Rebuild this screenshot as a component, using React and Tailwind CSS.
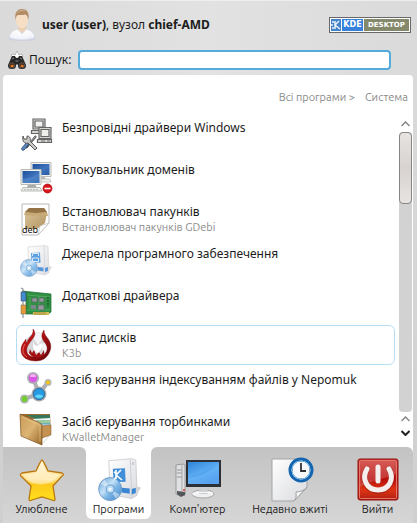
import React from "react";

function Gradients() {
  return (
    <svg className="absolute h-0 w-0" aria-hidden="true">
      <defs>
        <linearGradient id="screen" x1="0" y1="0" x2="1" y2="1">
          <stop offset="0" stopColor="#1d4f9c" /><stop offset="0.55" stopColor="#3f74bd" /><stop offset="1" stopColor="#2a5aa5" />
        </linearGradient>
        <linearGradient id="sky" x1="0" y1="0" x2="0.6" y2="1">
          <stop offset="0" stopColor="#2f84d8" /><stop offset="0.5" stopColor="#58a9f0" /><stop offset="1" stopColor="#3d8eea" />
        </linearGradient>
        <linearGradient id="box" x1="0" y1="0" x2="1" y2="1">
          <stop offset="0" stopColor="#dcc7a0" /><stop offset="1" stopColor="#b3935f" />
        </linearGradient>
        <linearGradient id="paper" x1="0" y1="0" x2="1" y2="1">
          <stop offset="0" stopColor="#ffffff" /><stop offset="1" stopColor="#d9dade" />
        </linearGradient>
        <linearGradient id="star" x1="0" y1="0" x2="0" y2="1">
          <stop offset="0" stopColor="#fff0c4" /><stop offset="0.48" stopColor="#ffe08a" /><stop offset="0.6" stopColor="#fdc91e" /><stop offset="1" stopColor="#ffe11a" />
        </linearGradient>
        <linearGradient id="red" x1="0" y1="0" x2="0" y2="1">
          <stop offset="0" stopColor="#cf3a35" /><stop offset="0.5" stopColor="#b80f0b" /><stop offset="0.75" stopColor="#dd3414" /><stop offset="1" stopColor="#b02010" />
        </linearGradient>
        <linearGradient id="wallet" x1="0" y1="0" x2="1" y2="1">
          <stop offset="0" stopColor="#c99b55" /><stop offset="0.5" stopColor="#dcb474" /><stop offset="1" stopColor="#946325" />
        </linearGradient>
        <linearGradient id="disc" x1="0" y1="0" x2="1" y2="1">
          <stop offset="0" stopColor="#5a97d2" /><stop offset="0.4" stopColor="#c4e2f8" /><stop offset="0.6" stopColor="#79b5e6" /><stop offset="1" stopColor="#4280c4" />
        </linearGradient>
        <radialGradient id="shirt" cx="0.5" cy="0.2" r="0.9">
          <stop offset="0" stopColor="#ffffff" /><stop offset="0.7" stopColor="#f2f3fa" /><stop offset="1" stopColor="#b9bed4" />
        </radialGradient>
        <linearGradient id="flame" x1="0" y1="0" x2="1" y2="1">
          <stop offset="0" stopColor="#d8201c" /><stop offset="0.5" stopColor="#a80f12" /><stop offset="1" stopColor="#5d0508" />
        </linearGradient>
      </defs>
    </svg>
  );
}

function UserIcon() {
  return (
    <svg className="h-8 w-7 shrink-0" viewBox="0 0 28 32" aria-hidden="true">
      <path d="M1 30C1 24 5 21 10 20l4 2 4-2c5 1 9 4 9 10-2 2-24 2-26 0z" fill="url(#shirt)" stroke="#cdd0de" strokeWidth=".6" />
      <path d="M10 18h8v3l-4 4-4-4z" fill="#edcfab" />
      <path d="M11 20l3 5 3-5" fill="none" stroke="#d9dbe8" />
      <ellipse cx="14" cy="10.500" rx="6" ry="9" fill="#f6dfc5" />
      <path d="M7.700 11C6 3 10 0 14 0s8 3 6.300 11C19.500 7 19 6 17 5.500c-3 1-6 0-8 1-.8 1-1 2-1.300 4.500z" fill="#b28c64" />
      <path d="M9 4c2-3 6-3 8-2" stroke="#d3b48d" fill="none" />
    </svg>
  );
}

function BinocularsIcon() {
  return (
    <svg className="h-[18px] w-[18px] shrink-0" viewBox="0 0 18 18" aria-hidden="true">
      <path d="M3 6l1-3 3 1 2-4 2 4 3-1 1 3" fill="#fff" stroke="#aaa" strokeWidth=".8" />
      <path d="M4 5h3l1 2h2l1-2h3l4 9c0 3-1 4-4 4s-4-1-4-4l-1-1-1 1c0 3-1 4-4 4s-4-1-4-4z" fill="#272727" />
      <path d="M4 8l2-1M12 7l2 1M7.500 10h3" stroke="#888" />
      <circle cx="4" cy="14.500" r="2.700" fill="#4b2d1a" stroke="#777" strokeWidth=".5" />
      <circle cx="14" cy="14.500" r="2.700" fill="#4b2d1a" stroke="#777" strokeWidth=".5" />
      <path d="M2.500 15c1-2 2-1 3-1v2H3zm10 0c1-2 2-1 3-1v2h-2.500z" fill="#e07c2a" />
    </svg>
  );
}

function Icon({ children }) {
  return <svg className="mt-[3px] h-8 w-8 shrink-0 overflow-visible" viewBox="0 0 32 32" aria-hidden="true">{children}</svg>;
}

function WirelessIcon() {
  return (
    <Icon>
      <g stroke="#666" strokeWidth="1.200" fill="#d6d6d2">
        <path d="M13 0h12v10H13z" /><path d="M15 2h8v6h-8z" fill="#f3f3f1" /><path d="M11.500 11.500h13v3h-13z" />
        <path d="M19 8.500h12v11H19z" /><path d="M21 10.500h8v7h-8z" fill="#eeeeeb" /><path d="M17.500 20.500h14v3h-14z" />
      </g>
      <path d="M27 22h3M21 22h4" stroke="#777" />
      <path d="M16 17L6 29" stroke="#444" strokeWidth="2" /><path d="M15.500 17.500L8 26" stroke="#ddd" strokeWidth=".7" />
      <path d="M9 25l-5 6c-2 1-3-1-2-2l5-6z" fill="#6188bc" stroke="#294b79" strokeWidth=".9" />
      <path d="M3 17l1 3 3 0 0-3c3 0 4 3 3 5l7 7-2 2-7-7c-4 1-6-2-5-7z" fill="#c8c8c4" stroke="#4b4b4b" strokeWidth=".9" />
    </Icon>
  );
}

function BlockerIcon() {
  return (
    <Icon>
      <path d="M16 16h9l1 3H15z" fill="#bbb" /><path d="M15 18h15l1 3H16z" fill="#eceeeb" stroke="#b3b5b1" strokeWidth=".7" />
      <path d="M11 1.500h20v14H11z" fill="#f2f3f0" stroke="#babdb6" /><path d="M12.500 3h17v11h-17z" fill="url(#screen)" />
      <path d="M8 23h7l2 4H7z" fill="#aaa" />
      <path d="M3 26.500h17l2 3.500H1z" fill="#eceeeb" stroke="#a9aca5" strokeWidth=".8" /><path d="M4 28.500h15" stroke="#bbb" strokeDasharray="2 1" />
      <path d="M1 8.500h20v15H1z" fill="#f2f3f0" stroke="#babdb6" /><path d="M2.500 10h17v12h-17z" fill="url(#screen)" />
      <path d="M3 18c6-1 12-2 16-6v10H3z" fill="#6aa0dc" opacity=".35" />
      <circle cx="27.500" cy="27.500" r="4.500" fill="#d8141c" stroke="#a6080e" strokeWidth=".7" /><path d="M24.500 27.500h6" stroke="#fff" strokeWidth="1.500" />
    </Icon>
  );
}

function DebIcon() {
  return (
    <Icon>
      <path d="M2 1h27v19L18 32H2z" fill="#fff" stroke="#b9b9b9" />
      <path d="M5 9l4-4h15l3 4-2 11-8 6H5z" fill="url(#box)" /><path d="M5 9l4-4h15l3 4-11 2z" fill="#947347" />
      <path d="M5 9l-1 3 11 1 1-3zM27 9l1 4-11 0-1-3z" fill="#c7a877" />
      <text x="2" y="30" fontFamily="Noto Sans, sans-serif" fontSize="9" fill="#111">deb</text>
      <path d="M18 32l2-9 9-3z" fill="#fff" stroke="#bbb" strokeWidth=".7" />
    </Icon>
  );
}

function SoftwareArt() {
  return (
    <>
      <path d="M27 29l5-7-3-1z" fill="#999" opacity=".4" />
      <path d="M8 2l17-1.500 3 1 1 26-4 2.500L9 27z" fill="url(#paper)" stroke="#c6c8ce" strokeWidth=".6" />
      <path d="M24 1l1 28" stroke="#c9ccd4" strokeWidth=".7" />
      <path d="M11 8l9-.5.5 10-9 .5z" fill="#418fd9" /><path d="M17.500 22l6 .5v4l-6-1zM25 23l3-1v4l-3 1z" fill="#3a86d3" />
      <circle cx="9" cy="23" r="8.500" fill="url(#disc)" stroke="#6b9ac8" strokeWidth=".7" />
      <path d="M9 23L2 19a8 8 0 0 1 3-3zM9 23l7 4a8 8 0 0 1-3 3z" fill="#fff" opacity=".45" />
      <circle cx="9" cy="23" r="3" fill="#bcdcf4" stroke="#6196cb" strokeWidth=".7" /><circle cx="9" cy="23" r="1.200" fill="#f7fbff" />
    </>
  );
}

function SourcesIcon() {
  return (
    <Icon>
      <g opacity=".85"><SoftwareArt /><path d="M12.500 11v-2.500h6V11M12.500 13h6v3.500h-6z" fill="none" stroke="#d4e9fb" /></g>
    </Icon>
  );
}

function CardIcon() {
  return (
    <Icon>
      <path d="M2 4l29 3v18l-3 2H6V8z" fill="#2f8f43" stroke="#1d6a2e" strokeWidth=".7" />
      <path d="M7 8l23 2M7 23h23M10 10v12M19 9v15" stroke="#5eb36b" strokeWidth=".7" />
      <path d="M13 25h16v3H13z" fill="#d4bc58" /><path d="M15 25v3m2-3v3m2-3v3m2-3v3m2-3v3m2-3v3" stroke="#75682b" strokeWidth=".5" />
      <path d="M1 1l2 1v29" fill="none" stroke="#8c9198" strokeWidth="1.200" />
      <path d="M1 5h5v9H1z" fill="#438ed0" stroke="#335" strokeWidth=".5" /><path d="M1 18h5v9H1z" fill="#e49a38" stroke="#665" strokeWidth=".5" />
      <path d="M12 11h5v4h-5zm7 0h5v4h-5zm-1 7h6v5h-6z" fill="#959a9f" stroke="#5d6a65" strokeWidth=".8" />
      <path d="M11 18h5v4h-5z" fill="#7b858c" /><path d="M28 10v10" stroke="#173f20" strokeDasharray="2 1" />
    </Icon>
  );
}

function BurnIcon() {
  return (
    <Icon>
      <circle cx="18" cy="16" r="12" fill="#d9d9dc" stroke="#c5c5c9" />
      <path d="M18 16L11 6c4-3 10-3 14 0zM18 16l11-3c1 4 0 8-3 11z" fill="#f4f4f6" />
      <path d="M13 0c4 5 1 8-2 12-3 4-5 7-4 11 1 4 5 5 9 5 6 0 10-3 11-7 1-4-2-7-4-10-2-4-1-7 1-10 0 4 2 6 4 9 3 4 4 9 1 14-2 5-7 8-13 8C7 32 1 28 1 21c0-5 3-8 5-11 0 2 0 3 1 4 1-6 7-7 6-14z" fill="url(#flame)" stroke="#74090c" strokeWidth=".4" />
      <path d="M5 15c-3 5-3 10 2 13" fill="none" stroke="#ef7c70" strokeWidth=".8" />
      <path d="M9 24l1-4 2 4 2-3 2 5 3-3 2 3 3-5 0 5c-4 4-11 4-15-2z" fill="#a31215" />
      <path d="M13 10c0 4 1 6 4 7l5-3-1 6-3 4c-3-1-5-4-5-7z" fill="#fff" />
    </Icon>
  );
}

function NepomukIcon() {
  return (
    <Icon>
      <path d="M13 7l6 16M4 28l15-5 9-12" fill="none" stroke="#aeb0b2" strokeWidth="4" />
      <circle cx="13" cy="7" r="6" fill="#adafb2" /><circle cx="19" cy="23" r="7.500" fill="#a7a9ac" />
      <circle cx="4.500" cy="28" r="4.500" fill="#b3b5b7" /><circle cx="28" cy="11.500" r="3.500" fill="#b3b5b7" />
      <circle cx="13" cy="7" r="4.200" fill="#dc55e6" /><path d="M10 6a3 3 0 0 1 6 0z" fill="#f2b0f5" />
      <circle cx="19" cy="23" r="5.700" fill="#2798e2" stroke="#1b5c91" strokeWidth=".7" /><path d="M15 25c2-2 6-2 8 0-1 3-7 3-8 0z" fill="#5fd4f9" />
      <circle cx="4.500" cy="28" r="2.900" fill="#6fce30" /><circle cx="28" cy="11.500" r="2" fill="#f3c313" />
    </Icon>
  );
}

function WalletIcon() {
  return (
    <Icon>
      <path d="M0 1h30l1 20-8 3z" fill="#9c6b2f" /><path d="M6 2h24v3L21 8z" fill="#347a59" />
      <path d="M12 6l18-1v8H20z" fill="#eef3f6" /><path d="M16 8h14M18 10h12" stroke="#43a348" /><path d="M20 11h10" stroke="#4594d5" />
      <path d="M20 13l11-1v10l-9 3z" fill="#c49151" stroke="#805321" strokeWidth=".5" />
      <path d="M0 1l20 9c2 1 2 2 2 4v18L1 23z" fill="url(#wallet)" stroke="#7b501d" strokeWidth=".7" />
      <path d="M2 4l18 8 0 17" fill="none" stroke="#edcc92" strokeWidth=".6" />
      <path d="M22 31l8-9" stroke="#aaa" opacity=".5" />
    </Icon>
  );
}

function TabIcon({ children }) {
  return <svg className="h-11 w-11 overflow-visible" viewBox="0 0 44 44" aria-hidden="true">{children}</svg>;
}

function StarIcon() {
  return (
    <TabIcon>
      <path d="M22 2c1 0 2 2 6 11l14 2c2 1 2 2 0 3L33 28l2 13c0 2-1 2-3 1l-10-3-10 3c-2 1-3 1-3-1l2-13L1 18c-1-1-1-2 1-3l14-2c4-9 5-11 6-11z" fill="url(#star)" stroke="#b97712" strokeWidth="1.300" />
      <path d="M22 4l5 11 13 2-8 7c-7 3-14 3-20 1L3 17l13-2z" fill="#fff" opacity=".4" />
    </TabIcon>
  );
}

function ProgramsIcon() {
  return (
    <TabIcon>
      <g transform="translate(1 0) scale(1.35)"><SoftwareArt /></g>
      <path d="M19 12v9m5-9l-5 5 6 5m-8-1l2-1m-2-6l2 1" fill="none" stroke="#fff" strokeWidth="1.600" />
      <path d="M36 4v3" stroke="#999" strokeWidth=".8" />
    </TabIcon>
  );
}

function ComputerIcon() {
  return (
    <TabIcon>
      <path d="M0 7l7-1 2 1v30l-5 1-4-2z" fill="#dfe0e2" stroke="#888b90" strokeWidth=".8" /><path d="M6 6v31" stroke="#a6a8ac" />
      <path d="M1 12h5M1 15h5M1 19h5" stroke="#999" /><path d="M1 33l8 1v3l-4 2-4-3z" fill="#55575b" /><circle cx="8" cy="32" r="1" fill="#dc3d2f" />
      <ellipse cx="27" cy="36" rx="11" ry="4" fill="#f0f0f2" stroke="#a5a6aa" /><path d="M24 28h7l1 8h-9z" fill="#ccced2" />
      <path d="M10 2h35v27H10z" fill="#2b3037" /><path d="M12 4h31v22H12z" fill="url(#sky)" />
      <path d="M12 20C22 19 33 15 43 6v20H12z" fill="#87c8ff" opacity=".35" />
      <path d="M16 36c5-2 16-2 21-1" stroke="#fff" fill="none" />
    </TabIcon>
  );
}

function RecentIcon() {
  return (
    <TabIcon>
      <path d="M4 1h35v28L26 43H4z" fill="url(#paper)" stroke="#a3a4a6" /><path d="M26 43c3-3 2-7 2-9 3 0 8-1 11-5z" fill="#fafafa" stroke="#9d9ea1" />
      <circle cx="33" cy="12" r="11" fill="#f7f8fa" stroke="#1265ae" strokeWidth="3" /><circle cx="33" cy="12" r="9" fill="none" stroke="#65aee2" />
      <path d="M33 5v8h5" fill="none" stroke="#303338" strokeWidth="1.800" /><path d="M33 3v1m0 16v1m-9-9h1m16 0h1" stroke="#777" />
    </TabIcon>
  );
}

function PowerIcon() {
  return (
    <TabIcon>
      <rect x="2" y="1" width="40" height="41" rx="2" fill="url(#red)" stroke="#90110c" />
      <rect x="3.500" y="2.500" width="37" height="38" rx="1" fill="none" stroke="#e2756c" />
      <path d="M4 3h36v13C30 20 15 23 4 29z" fill="#fff" opacity=".17" />
      <path d="M11 11c-6 10 0 22 11 22s17-12 11-22" fill="none" stroke="#801510" strokeWidth="6" strokeLinecap="round" opacity=".4" />
      <path d="M11 11c-6 10 0 21 11 21s17-11 11-21M22 9v14" fill="none" stroke="#f4efed" strokeWidth="5" strokeLinecap="round" />
    </TabIcon>
  );
}

const apps = [
  { title: "Безпровідні драйвери Windows", Art: WirelessIcon },
  { title: "Блокувальник доменів", Art: BlockerIcon },
  { title: "Встановлювач пакунків", sub: "Встановлювач пакунків GDebi", Art: DebIcon },
  { title: "Джерела програмного забезпечення", Art: SourcesIcon },
  { title: "Додаткові драйвера", Art: CardIcon },
  { title: "Запис дисків", sub: "K3b", Art: BurnIcon, selected: true },
  { title: "Засіб керування індексуванням файлів у Nepomuk", Art: NepomukIcon },
  { title: "Засіб керування торбинками", sub: "KWalletManager", Art: WalletIcon },
];

const tabs = [
  { label: "Улюблене", Art: StarIcon, style: "rounded-tr-md pr-[6px] bg-linear-to-b from-[#c3c3c3] to-[#d6d6d6]" },
  { label: "Програми", Art: ProgramsIcon, style: "mb-1 rounded-b-md bg-white" },
  { label: "Комп'ютер", Art: ComputerIcon, style: "rounded-tl-md bg-linear-to-b from-[#c3c3c3] to-[#d6d6d6]" },
  { label: "Недавно вжиті", Art: RecentIcon, style: "bg-linear-to-b from-[#c3c3c3] to-[#d6d6d6]" },
  { label: "Вийти", Art: PowerIcon, style: "rounded-tr-md pl-[6px] bg-linear-to-b from-[#c3c3c3] to-[#d6d6d6]" },
];

function Chevron({ down, dark, label }) {
  return (
    <button aria-label={label} className="flex h-[14px] w-full items-center justify-center">
      <svg className="h-[6px] w-[9px]" viewBox="0 0 9 6" fill="none" stroke={dark ? "#222" : "#888"} strokeWidth={dark ? 2 : 1.5} aria-hidden="true">
        <path d={down ? "M.5 1l4 4 4-4" : "M.5 5l4-4 4 4"} />
      </svg>
    </button>
  );
}

export default function App() {
  return (
    <main className="flex h-screen flex-col overflow-hidden border-t border-[#eeeeee] bg-[#d2d2d2] bg-linear-to-b from-[#dcdcdc] to-[#cfcfcf] pr-1 pl-[3px] font-['Ubuntu','Noto_Sans',sans-serif] text-[11px] text-[#1c1c1c]">
      <Gradients />
      <header className="-mr-1 -ml-[3px] bg-linear-to-r from-[#dadada] via-[#e2e2e2] to-[#dadada] pr-[6px] pb-[5px] pl-2 font-['Noto_Sans',sans-serif] text-xs">
        <div className="flex h-12 items-center">
          <UserIcon />
          <p className="ml-[6px] flex-1 whitespace-nowrap"><b>user (user)</b>, вузол <b>chief-AMD</b></p>
          <div className="flex h-4 w-[82px] gap-px border border-[#686868] bg-white p-px font-['DejaVu_Sans',sans-serif] text-[8px] leading-3 font-bold text-white">
            <svg className="h-3 w-[10px] shrink-0 bg-[#4381c9]" viewBox="0 0 10 12" aria-hidden="true">
              <path d="M4 2v8m4-8L4 6l5 4M1 3h2M0 6h2M1 9h2" fill="none" stroke="#e7f2fc" strokeWidth="1.500" />
            </svg>
            <span className="flex w-[21px] justify-center bg-[#3781dc]">KDE</span>
            <span className="flex flex-1 justify-center overflow-hidden bg-[#85896b] text-[7px]">DESKTOP</span>
          </div>
        </div>
        <div className="flex h-[21px] items-center pr-3">
          <BinocularsIcon />
          <label htmlFor="search" className="ml-[3px] w-[49px] whitespace-nowrap">Пошук:</label>
          <input id="search" className="mr-2 h-5 min-w-0 flex-1 rounded-sm border-2 border-[#55abd9] bg-white px-1 outline-none" />
        </div>
      </header>

      <section className="flex min-h-0 flex-1 flex-col rounded-t-sm bg-white">
        <nav className="flex h-10 shrink-0 items-center justify-end gap-[10px] pt-1 pr-[5px] text-[#8a8a8a]">
          <a href="#all">Всі програми &gt;</a>
          <a href="#system">Система</a>
        </nav>
        <div className="flex min-h-0 flex-1 pr-px">
          <ul className="min-h-0 flex-1 overflow-hidden pl-[13px]">
            {apps.map(({ title, sub, Art, selected }) => (
              <li key={title} className="h-[42px]">
                <button className={selected
                  ? "flex h-10 w-full items-start gap-[10px] rounded-md border border-[#b5ddf5] pl-[3px] text-left"
                  : "flex h-10 w-full items-start gap-[10px] rounded-md border border-transparent pl-[3px] text-left"}>
                  <Art />
                  <span className="flex flex-col whitespace-nowrap pt-1">
                    <span className="font-['Noto_Sans',sans-serif] text-xs leading-4">{title}</span>
                    {sub && <span className="leading-[14px] text-[#8c8c8c]">{sub}</span>}
                  </span>
                </button>
              </li>
            ))}
          </ul>
          <div className="ml-1 flex w-[13px] flex-col pt-[2px] pb-[7px]">
            <Chevron label="Вгору" />
            <div className="mt-px min-h-0 flex-1 rounded-sm bg-[#d2d2d2]">
              <div className="h-[72px] rounded-sm border border-[#858585] bg-linear-to-b from-[#e6e3e1] via-[#d8d3d0] to-[#e6e3e1]" />
            </div>
            <Chevron label="Рядок вгору" />
            <Chevron label="Рядок вниз" down dark />
          </div>
        </div>
      </section>

      <footer className="grid h-[76px] shrink-0 grid-cols-[83fr_65fr_93fr_92fr_77fr] bg-linear-to-b from-white from-50% to-[#d6d6d6] to-50%">
        {tabs.map(({ label, Art, style }) => (
          <button key={label} className={`${style} flex min-w-0 flex-col items-center pt-[11px] whitespace-nowrap`}>
            <Art />
            <span className="leading-[14px]">{label}</span>
          </button>
        ))}
      </footer>
    </main>
  );
}
